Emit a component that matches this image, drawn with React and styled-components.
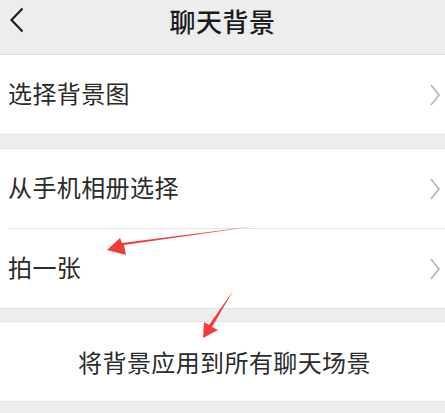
import styled, { createGlobalStyle } from 'styled-components';

const GlobalStyle = createGlobalStyle`
  html, body {
    margin: 0;
    padding: 0;
    background: #ededed;
  }
  body {
    font-family: "Noto Sans CJK SC", "Noto Sans", sans-serif;
  }
`;

const Page = styled.div`
  position: relative;
  width: 445px;
  height: 413px;
  overflow: hidden;
  background: #ededed;
`;

const Header = styled.div`
  display: flex;
  align-items: center;
  justify-content: center;
  position: relative;
  height: 54px;
  border-bottom: 1px solid #dedede;
`;

const Back = styled.div`
  position: absolute;
  left: 9px;
  top: 7px;
  display: flex;
`;

const Title = styled.h1`
  margin: 0 0 14px;
  font-size: 26px;
  font-weight: 500;
  color: #1c1c1c;
  letter-spacing: 0.5px;
`;

const Section = styled.div`
  background: #fff;
  margin-top: ${(p) => p.gap || 0}px;
  border-top: ${(p) => (p.gap ? '1px solid #e3e3e3' : 'none')};
  border-bottom: 1px solid #e3e3e3;
`;

const Row = styled.div`
  display: flex;
  align-items: center;
  justify-content: ${(p) => (p.center ? 'center' : 'space-between')};
  height: ${(p) => p.h || 79}px;
  padding: 0 4px 0 8px;
  margin-left: ${(p) => (p.divided ? 0 : 0)};
  & + & {
    border-top: 1px solid #e6e6e6;
    margin-left: 8px;
    padding-left: 0;
  }
`;

const Label = styled.span`
  font-size: 24px;
  color: #2b2b2b;
  letter-spacing: 0.4px;
  margin-top: ${(p) => p.shift || 0}px;
`;

const Chevron = () => (
  <svg width="12" height="22" viewBox="0 0 12 22">
    <path d="M2 1 L10 11 L2 21" fill="none" stroke="#b5b5b5" strokeWidth="1.6" />
  </svg>
);

const Arrows = styled.svg`
  position: absolute;
  left: 0;
  top: 0;
  pointer-events: none;
`;

const App = () => (
  <>
    <GlobalStyle />
    <Page>
      <Header>
        <Back>
          <svg width="16" height="26" viewBox="0 0 16 26">
            <path d="M13.5 1.5 L2.5 13 L13.5 24.5" fill="none" stroke="#1f1f1f" strokeWidth="2.2" />
          </svg>
        </Back>
        <Title>聊天背景</Title>
      </Header>
      <Section>
        <Row>
          <Label shift={-4}>选择背景图</Label>
          <Chevron />
        </Row>
      </Section>
      <Section gap={13}>
        <Row h={79}>
          <Label shift={-4}>从手机相册选择</Label>
          <Chevron />
        </Row>
        <Row h={79}>
          <Label shift={-4}>拍一张</Label>
          <Chevron />
        </Row>
      </Section>
      <Section gap={12}>
        <Row center h={79}>
          <Label shift={0}>将背景应用到所有聊天场景</Label>
        </Row>
      </Section>
      <Arrows width="445" height="413" viewBox="0 0 445 413">
        <path d="M256 226 L124 245 L126 255 L107 250 L120 238 L122 243 Z" fill="#f23b3b" />
        <path d="M233 291 L212 327 L218 330 L203 338 L204 322 L209 325 Z" fill="#f23b3b" />
      </Arrows>
    </Page>
  </>
);

export default App;
